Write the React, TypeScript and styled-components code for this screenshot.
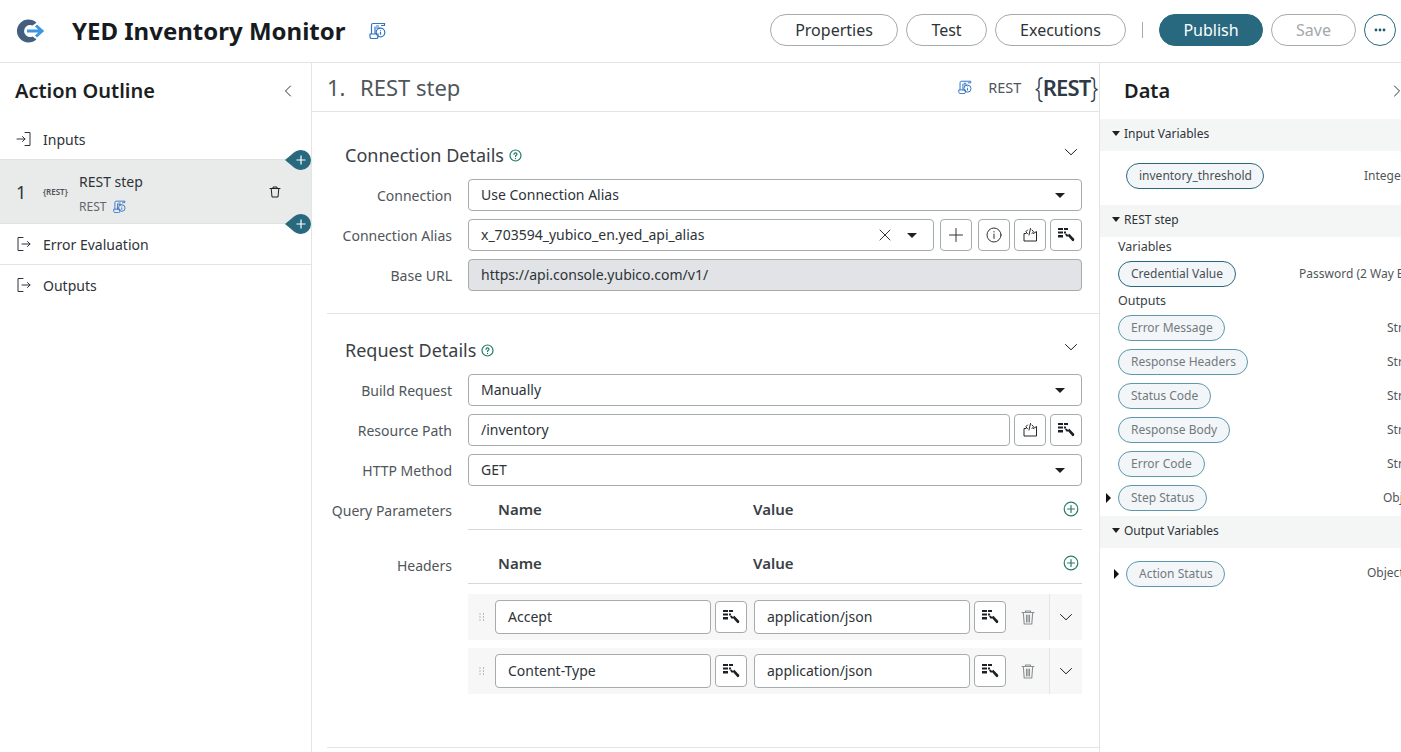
import styled, { createGlobalStyle } from "styled-components";
import { ReactNode } from "react";

const GlobalStyle = createGlobalStyle`
  html, body {
    margin: 0;
    padding: 0;
    height: 100%;
    background: #fff;
    font-family: "Noto Sans", "Open Sans", sans-serif;
    color: #2e3338;
  }
  * { box-sizing: border-box; }
`;

const Page = styled.div`
  width: 100vw;
  height: 100vh;
  overflow: hidden;
  display: flex;
  flex-direction: column;
`;

/* top bar */
const TopBar = styled.header`
  height: 63px;
  flex: none;
  display: flex;
  align-items: center;
  border-bottom: 1px solid #e3e5e5;
  padding: 0 5px 2px 16px;
`;

const Logo = styled.div`
  width: 30px;
  height: 24px;
  margin: 2px 26px 0 0;
  display: flex;
`;

const AppTitle = styled.h1`
  margin: 2px 24px 0 0;
  font-size: 24px;
  line-height: 32px;
  font-weight: 700;
  color: #171b1f;
`;

const TopActions = styled.div`
  margin-left: auto;
  display: flex;
  align-items: center;
  gap: 8px;
`;

const Pill = styled.button<{ $primary?: boolean; $disabled?: boolean; $w: number }>`
  width: ${(p) => p.$w}px;
  height: 32px;
  border-radius: 16px;
  font: 400 16px "Noto Sans", sans-serif;
  padding: 0;
  background: ${(p) => (p.$primary ? "#28697f" : "#fff")};
  color: ${(p) => (p.$primary ? "#fff" : p.$disabled ? "#a3a8ab" : "#2e3338")};
  border: 1px solid ${(p) => (p.$primary ? "#28697f" : "#a6abab")};
`;

const TopSep = styled.div`
  width: 1px;
  height: 16px;
  background: #a6abab;
  margin: 0 8px;
`;

const MoreButton = styled.button`
  width: 32px;
  height: 32px;
  border-radius: 50%;
  padding: 0;
  background: #fff;
  border: 1px solid #28697f;
  display: flex;
  align-items: center;
  justify-content: center;
`;

/* three columns */
const Columns = styled.div`
  flex: 1;
  min-height: 0;
  display: flex;
`;

const OutlinePanel = styled.aside`
  width: 312px;
  flex: none;
  border-right: 1px solid #e3e5e5;
`;

const OutlineHead = styled.div`
  height: 56px;
  padding: 0 19px 0 15px;
  display: flex;
  align-items: center;
  justify-content: space-between;
`;

const PanelTitle = styled.h2`
  margin: 0;
  font-size: 20px;
  line-height: 28px;
  font-weight: 600;
  color: #1b1f23;
`;

const OutlineRow = styled.div<{ $border?: boolean }>`
  height: ${(p) => (p.$border ? 41 : 40)}px;
  display: flex;
  align-items: center;
  gap: 11px;
  padding-left: 16px;
  font-size: 14px;
  color: #2e3338;
  border-bottom: ${(p) => (p.$border ? "1px solid #e3e5e5" : "none")};
`;

const StepRow = styled.div`
  position: relative;
  height: 65px;
  background: #e9ebeb;
  border-top: 1px solid #e0e2e2;
  border-bottom: 1px solid #e0e2e2;
  display: flex;
  align-items: center;
  padding-left: 16px;
`;

const StepNumber = styled.span`
  font-size: 18px;
  width: 27px;
`;

const StepGlyph = styled.span`
  font-size: 8px;
  font-weight: 600;
  width: 36px;
  color: #4d5257;
`;

const StepText = styled.div`
  flex: 1;
  display: flex;
  flex-direction: column;
  gap: 7px;
  padding-top: 3px;
`;

const StepName = styled.span`
  font-size: 14px;
  line-height: 20px;
`;

const StepKind = styled.span`
  font-size: 12px;
  line-height: 16px;
  color: #61676b;
  display: flex;
  align-items: center;
  gap: 7px;
`;

const TrashSlot = styled.span`
  width: 36px;
  margin-right: 18px;
  display: flex;
  justify-content: center;
`;

const AddMarker = styled.div<{ $place: "top" | "bottom" }>`
  position: absolute;
  right: 0;
  ${(p) => (p.$place === "top" ? "top: -10px;" : "bottom: -11px;")}
  width: 26px;
  height: 20px;
  display: flex;
`;

/* middle */
const EditorPanel = styled.main`
  width: 788px;
  flex: none;
  border-right: 1px solid #e3e5e5;
  padding-left: 15px;
`;

const EditorHead = styled.div`
  height: 49px;
  margin-left: -15px;
  padding: 0 2px 0 15px;
  border-bottom: 1px solid #e3e5e5;
  display: flex;
  align-items: center;
`;

const StepHeading = styled.div`
  font-size: 22px;
  color: #50565a;
  flex: 1;
  display: flex;
`;

const HeadingNumber = styled.span`
  width: 33px;
`;

const HeadKind = styled.span`
  font-size: 14.5px;
  color: #50565a;
  margin: 0 15px 0 16px;
`;

const RestMark = styled.span`
  display: flex;
  align-items: center;
  color: #2f3a48;
`;

const RestBrace = styled.span`
  font-size: 29px;
  line-height: 30px;
  font-weight: 300;
  display: inline-block;
  transform: scaleX(0.8);
  margin: 0 -2px;
`;

const RestWord = styled.span`
  font-size: 22px;
  line-height: 30px;
  font-weight: 600;
  letter-spacing: -0.8px;
`;

const Section = styled.section<{ $h: number; $pad: number }>`
  height: ${(p) => p.$h}px;
  border-bottom: 1px solid #e3e5e5;
  padding-top: ${(p) => p.$pad}px;
`;

const SectionHead = styled.div`
  height: 28px;
  margin: 0 22px 10px 18px;
  display: flex;
  align-items: center;
`;

const SectionTitle = styled.h3`
  margin: 0 5px 0 0;
  font-size: 18px;
  font-weight: 400;
  color: #3a4045;
`;

const Chevron = styled.span`
  margin: 0 0 6px auto;
  display: flex;
`;

const FormRow = styled.div`
  display: grid;
  grid-template-columns: 125px 1fr;
  column-gap: 16px;
  align-items: center;
  margin-bottom: 8px;
  width: 755px;
`;

const FieldLabel = styled.label`
  font-size: 14px;
  color: #50565a;
  text-align: right;
  white-space: nowrap;
`;

const FieldLine = styled.div`
  display: flex;
  gap: 4px;
`;

const Field = styled.div<{ $readOnly?: boolean }>`
  flex: 1;
  height: 32px;
  border: 1px solid #a6abab;
  border-radius: 4px;
  background: ${(p) => (p.$readOnly ? "#e1e3e6" : "#fff")};
  display: flex;
  align-items: center;
  padding: 0 16px 2px 12px;
  font-size: 14px;
  color: #2e3338;
`;

const FieldIcons = styled.span`
  margin: 2px 0 0 auto;
  display: flex;
  align-items: center;
  gap: 16px;
`;

const Caret = styled.span`
  width: 0;
  height: 0;
  border-left: 5px solid transparent;
  border-right: 5px solid transparent;
  border-top: 5px solid #1c2024;
`;

const IconButton = styled.button<{ $spaced?: boolean }>`
  width: 32px;
  height: 32px;
  flex: none;
  margin-left: ${(p) => (p.$spaced ? 2 : 0)}px;
  border: 1px solid #a6abab;
  border-radius: 4px;
  background: #fff;
  padding: 0;
  display: flex;
  align-items: center;
  justify-content: center;
`;

const ParamHead = styled.div<{ $top?: number }>`
  height: ${(p) => 36 + (p.$top ?? 0)}px;
  display: flex;
  align-items: center;
  border-bottom: 1px solid #d5d8d8;
  font-size: 15px;
  font-weight: 600;
  color: #3a4045;
  padding: ${(p) => p.$top ?? 0}px 3px 6px 30px;
`;

const ParamName = styled.span`
  width: 255px;
`;

const ParamAdd = styled.span`
  margin-left: auto;
  display: flex;
`;

const ParamBlock = styled.div`
  display: grid;
  grid-template-columns: 125px 614px;
  column-gap: 16px;
  width: 755px;
`;

const ParamLabel = styled(FieldLabel)<{ $top: number }>`
  padding-top: ${(p) => p.$top}px;
`;

const HeaderList = styled.div`
  display: flex;
  flex-direction: column;
  gap: 8px;
  padding-top: 10px;
`;

const HeaderRow = styled.div`
  height: 46px;
  background: #f7f7f7;
  display: flex;
  align-items: center;
`;

const DragDots = styled.span`
  width: 27px;
  display: flex;
  justify-content: center;
`;

const HeaderCell = styled.div`
  display: flex;
  gap: 4px;
  width: 252px;
  align-items: center;
  margin-right: 7px;
`;

const HeaderInput = styled(Field)`
  height: 34px;
`;

const HeaderTrash = styled.span`
  width: 36px;
  padding-right: 6px;
  display: flex;
  justify-content: center;
`;

const HeaderExpand = styled.span`
  height: 100%;
  flex: 1;
  border-left: 1px solid #e3e5e5;
  display: flex;
  align-items: center;
  justify-content: center;
`;

/* right */
const DataPanel = styled.aside`
  flex: 1;
  min-width: 0;
  overflow: hidden;
`;

const DataHead = styled.div`
  height: 56px;
  padding: 0 0 0 24px;
  display: flex;
  align-items: center;
  justify-content: space-between;
`;

const GroupBar = styled.div`
  height: 32px;
  background: #f4f6f6;
  display: flex;
  align-items: center;
  gap: 4px;
  padding: 0 0 3px 12px;
  font-size: 12px;
  color: #2e3338;
`;

const DownCaret = styled(Caret)`
  border-left-width: 4.5px;
  border-right-width: 4.5px;
`;

const SubLabel = styled.div`
  height: 20px;
  padding: 0 0 1px 18px;
  display: flex;
  align-items: center;
  font-size: 12.5px;
  color: #3a4045;
`;

const VarRow = styled.div<{ $pad: number; $h?: number; $after?: number }>`
  height: ${(p) => p.$h ?? 34}px;
  margin-bottom: ${(p) => p.$after ?? 0}px;
  display: flex;
  align-items: center;
  padding-left: ${(p) => p.$pad}px;
  white-space: nowrap;
`;

const VarSlot = styled.div<{ $w: number }>`
  width: ${(p) => p.$w}px;
  flex: none;
  display: flex;
  align-items: center;
`;

const VarPill = styled.span<{ $w: number; $muted?: boolean }>`
  width: ${(p) => p.$w}px;
  height: 26px;
  flex: none;
  border-radius: 13px;
  border: 1px solid ${(p) => (p.$muted ? "#5d98ad" : "#28697f")};
  background: #f2f6f8;
  display: flex;
  align-items: center;
  padding: 0 0 1px 12px;
  font-size: 12px;
  color: ${(p) => (p.$muted ? "#737a7e" : "#4a5055")};
`;

const VarType = styled.span`
  font-size: 12px;
  color: #50565a;
  padding-bottom: 2px;
`;

const SideCaret = styled.span`
  flex: none;
  width: 0;
  height: 0;
  margin-right: 7px;
  border-top: 5px solid transparent;
  border-bottom: 5px solid transparent;
  border-left: 5px solid #111;
`;

const Ic = ({ s = 16, w = s, sw = 1, c = "#2e3338", children }: { s?: number; w?: number; sw?: number; c?: string; children: ReactNode }) => (
  <svg width={w} height={s} viewBox={`0 0 ${w} ${s}`} fill="none" stroke={c} strokeWidth={sw} strokeLinecap="round" strokeLinejoin="round">
    {children}
  </svg>
);

const ScriptIcon = ({ s = 17, c = "#3374c4" }: { s?: number; c?: string }) => (
  <svg width={s} height={s} viewBox="0 0 17 17" fill="none" stroke={c} strokeWidth="1.2">
    <path d="M4 1.500h11.500v2H12M4 1.500c-1 0-1.500.8-1.500 1.800v8.500M6 4.500v8M1 12h8v2.800c0 1-.6 1.700-1.500 1.700H2.500C1.500 16.500 1 15.500 1 14.500V12z" />
    <circle cx="11.500" cy="10.500" r="4.300" />
    <path d="M11.500 9.800v3M11.500 8v.8M7 6h4M7 4h3" />
  </svg>
);

const PickerIcon = () => (
  <svg width="18" height="16" viewBox="0 0 18 16" fill="#1c2024">
    <rect x="1" y="1" width="5" height="2" />
    <rect x="7" y="1" width="4" height="2" />
    <rect x="1" y="4.500" width="5" height="2" />
    <rect x="7" y="4.500" width="2" height="2" />
    <rect x="1" y="8" width="5" height="2.500" />
    <path d="M8 7.500l1.500-1 2 2-1.500 1.500z" />
    <path d="M10.500 8.500l1.800-1.800 5 5.300-.3 1.800-1.500.4z" />
  </svg>
);

const CodeIcon = () => (
  <Ic s={16} sw={1} c="#22262a">
    <path d="M4 6.500H2v7.500h12.500V4.500L11.500 6.500" />
    <path d="M5.500 3L3.800 4.800 5.500 6.500M10 3l1.600 1.800L10 6.500M8.500 1.500L7 8" />
  </Ic>
);

const XIcon = () => (
  <Ic s={12} w={12} c="#2e3338">
    <path d="M1 1l10 10M11 1L1 11" />
  </Ic>
);

const ChevronDown = ({ w = 12 }: { w?: number }) => (
  <Ic s={8} w={w} c="#1c2024" sw={1}>
    <path d={`M.5 1.500L${w / 2} 6.800 ${w - 0.5} 1.500`} />
  </Ic>
);

const PlusCircle = () => (
  <Ic s={16} c="#2c7a6a" sw={1.2}>
    <circle cx="8" cy="8" r="6.800" />
    <path d="M8 4.500v7M4.500 8h7" />
  </Ic>
);

const HelpIcon = () => (
  <Ic s={13} w={13} c="#1f7a66" sw={1.2}>
    <circle cx="6.500" cy="6.500" r="5.500" />
    <path d="M5 5.300c0-2 3-2 3 0 0 1-1.500 1-1.500 2.200M6.500 9.300v.3" />
  </Ic>
);

const Trash = ({ c = "#8a8f91", s = 16 }: { c?: string; s?: number }) => (
  <Ic s={s} c={c} sw={1.1}>
    <path d="M2 3.500h12M5.500 3.500V2h5v1.500M3.300 3.500L4.200 15h7.600l.9-11.500M6.500 6v7M8 6v7M9.500 6v7" />
  </Ic>
);

const Drag = () => (
  <svg width="6" height="8" viewBox="0 0 6 8" fill="#7d8285">
    {[0.5, 3.5, 6.5].map((y) => (
      <g key={y}>
        <rect x="0.500" y={y} width="1" height="1" />
        <rect x="4" y={y} width="1" height="1" />
      </g>
    ))}
  </svg>
);

const Marker = ({ place }: { place: "top" | "bottom" }) => (
  <AddMarker $place={place}>
    <svg width="26" height="20" viewBox="0 0 26 20">
      <path d="M0 10 L9 2.500 C11 1 13 0 16 0 A10 10 0 0 1 16 20 C13 20 11 19 9 17.500 Z" fill="#28697f" />
      <path d="M16 5.500v9M11.500 10h9" stroke="#fff" strokeWidth="1.200" />
    </svg>
  </AddMarker>
);

const DataChevron = () => (
  <Ic s={12} w={8} c="#2e3338">
    <path d="M1.500 1l5 5-5 5" />
  </Ic>
);

const outputs: { name: string; w: number; type: string; typeX: number; caret?: boolean }[] = [
  { name: "Error Message", w: 107, type: "String", typeX: 287 },
  { name: "Response Headers", w: 130, type: "String", typeX: 287 },
  { name: "Status Code", w: 93, type: "String", typeX: 287 },
  { name: "Response Body", w: 112, type: "String", typeX: 287 },
  { name: "Error Code", w: 87, type: "String", typeX: 287 },
  { name: "Step Status", w: 89, type: "Object", typeX: 283, caret: true },
];

const HeaderEntry = ({ name, value }: { name: string; value: string }) => (
  <HeaderRow>
    <DragDots>
      <Drag />
    </DragDots>
    <HeaderCell>
      <HeaderInput>{name}</HeaderInput>
      <IconButton>
        <PickerIcon />
      </IconButton>
    </HeaderCell>
    <HeaderCell>
      <HeaderInput>{value}</HeaderInput>
      <IconButton>
        <PickerIcon />
      </IconButton>
    </HeaderCell>
    <HeaderTrash>
      <Trash />
    </HeaderTrash>
    <HeaderExpand>
      <ChevronDown />
    </HeaderExpand>
  </HeaderRow>
);

export default function App() {
  return (
    <Page>
      <GlobalStyle />
      <TopBar>
        <Logo>
          <svg width="30" height="24" viewBox="0 0 30 24">
            <path d="M20.500 3.800A11.500 11.500 0 1 0 20.500 20.200L16.500 17.500A6 6 0 1 1 16.500 6.500Z" fill="#42607d" />
            <path d="M11 12h15M20 6.500l6 5.500-6 5.500" fill="none" stroke="#3b97e3" strokeWidth="3" />
          </svg>
        </Logo>
        <AppTitle>YED Inventory Monitor</AppTitle>
        <ScriptIcon />
        <TopActions>
          <Pill $w={128}>Properties</Pill>
          <Pill $w={81}>Test</Pill>
          <Pill $w={131}>Executions</Pill>
          <TopSep />
          <Pill $w={104} $primary>Publish</Pill>
          <Pill $w={85} $disabled>Save</Pill>
          <MoreButton>
            <svg width="12" height="4" viewBox="0 0 12 4" fill="#1d5a70">
              <circle cx="2" cy="2" r="1.400" />
              <circle cx="6" cy="2" r="1.400" />
              <circle cx="10" cy="2" r="1.400" />
            </svg>
          </MoreButton>
        </TopActions>
      </TopBar>

      <Columns>
        <OutlinePanel>
          <OutlineHead>
            <PanelTitle>Action Outline</PanelTitle>
            <Ic s={12} w={8}>
              <path d="M6.500 1l-5 5 5 5" />
            </Ic>
          </OutlineHead>
          <OutlineRow>
            <Ic>
              <path d="M1 8h8M6.500 5.500L9 8l-2.500 2.500M9 1.500h5v13H9" />
            </Ic>
            Inputs
          </OutlineRow>
          <StepRow>
            <Marker place="top" />
            <StepNumber>1</StepNumber>
            <StepGlyph>{"{REST}"}</StepGlyph>
            <StepText>
              <StepName>REST step</StepName>
              <StepKind>
                REST
                <ScriptIcon s={13} />
              </StepKind>
            </StepText>
            <TrashSlot>
              <Ic s={12} w={12} c="#1c2024">
                <path d="M1 2.500h10M4 2.500V1h4v1.500M2.200 2.500L3 11h6l.8-8.500" />
              </Ic>
            </TrashSlot>
            <Marker place="bottom" />
          </StepRow>
          <OutlineRow $border>
            <Ic>
              <path d="M7 1.500H2v13h5M6 8h8M11.500 5.500L14 8l-2.500 2.500" />
            </Ic>
            Error Evaluation
          </OutlineRow>
          <OutlineRow>
            <Ic>
              <path d="M7 1.500H2v13h5M6 8h8M11.500 5.500L14 8l-2.500 2.500" />
            </Ic>
            Outputs
          </OutlineRow>
        </OutlinePanel>

        <EditorPanel>
          <EditorHead>
            <StepHeading>
              <HeadingNumber>1.</HeadingNumber>
              REST step
            </StepHeading>
            <ScriptIcon s={14} />
            <HeadKind>REST</HeadKind>
            <RestMark>
              <RestBrace>{"{"}</RestBrace>
              <RestWord>REST</RestWord>
              <RestBrace>{"}"}</RestBrace>
            </RestMark>
          </EditorHead>

          <Section $h={202} $pad={29}>
            <SectionHead>
              <SectionTitle>Connection Details</SectionTitle>
              <HelpIcon />
              <Chevron>
                <ChevronDown />
              </Chevron>
            </SectionHead>
            <FormRow>
              <FieldLabel>Connection</FieldLabel>
              <FieldLine>
                <Field>
                  Use Connection Alias
                  <FieldIcons>
                    <Caret />
                  </FieldIcons>
                </Field>
              </FieldLine>
            </FormRow>
            <FormRow>
              <FieldLabel>Connection Alias</FieldLabel>
              <FieldLine>
                <Field>
                  x_703594_yubico_en.yed_api_alias
                  <FieldIcons>
                    <XIcon />
                    <Caret />
                  </FieldIcons>
                </Field>
                <IconButton $spaced>
                  <Ic>
                    <path d="M8 1.500v13M1.500 8h13" />
                  </Ic>
                </IconButton>
                <IconButton $spaced>
                  <Ic>
                    <circle cx="8" cy="8" r="7" />
                    <path d="M8 7v4.500M8 4.500v.5" />
                  </Ic>
                </IconButton>
                <IconButton>
                  <CodeIcon />
                </IconButton>
                <IconButton>
                  <PickerIcon />
                </IconButton>
              </FieldLine>
            </FormRow>
            <FormRow>
              <FieldLabel>Base URL</FieldLabel>
              <FieldLine>
                <Field $readOnly>https://api.console.yubico.com/v1/</Field>
              </FieldLine>
            </FormRow>
          </Section>

          <Section $h={434} $pad={22}>
            <SectionHead>
              <SectionTitle>Request Details</SectionTitle>
              <HelpIcon />
              <Chevron>
                <ChevronDown />
              </Chevron>
            </SectionHead>
            <FormRow>
              <FieldLabel>Build Request</FieldLabel>
              <FieldLine>
                <Field>
                  Manually
                  <FieldIcons>
                    <Caret />
                  </FieldIcons>
                </Field>
              </FieldLine>
            </FormRow>
            <FormRow>
              <FieldLabel>Resource Path</FieldLabel>
              <FieldLine>
                <Field>/inventory</Field>
                <IconButton>
                  <CodeIcon />
                </IconButton>
                <IconButton>
                  <PickerIcon />
                </IconButton>
              </FieldLine>
            </FormRow>
            <FormRow>
              <FieldLabel>HTTP Method</FieldLabel>
              <FieldLine>
                <Field>
                  GET
                  <FieldIcons>
                    <Caret />
                  </FieldIcons>
                </Field>
              </FieldLine>
            </FormRow>
            <ParamBlock>
              <ParamLabel $top={7}>Query Parameters</ParamLabel>
              <ParamHead>
                <ParamName>Name</ParamName>
                Value
                <ParamAdd>
                  <PlusCircle />
                </ParamAdd>
              </ParamHead>
            </ParamBlock>
            <ParamBlock>
              <ParamLabel $top={26}>Headers</ParamLabel>
              <div>
                <ParamHead $top={18}>
                  <ParamName>Name</ParamName>
                  Value
                  <ParamAdd>
                    <PlusCircle />
                  </ParamAdd>
                </ParamHead>
                <HeaderList>
                  <HeaderEntry name="Accept" value="application/json" />
                  <HeaderEntry name="Content-Type" value="application/json" />
                </HeaderList>
              </div>
            </ParamBlock>
          </Section>
        </EditorPanel>

        <DataPanel>
          <DataHead>
            <PanelTitle>Data</PanelTitle>
            <DataChevron />
          </DataHead>
          <GroupBar>
            <DownCaret />
            Input Variables
          </GroupBar>
          <VarRow $pad={26} $h={50} $after={4}>
            <VarSlot $w={238}>
              <VarPill $w={138}>inventory_threshold</VarPill>
            </VarSlot>
            <VarType>Integer</VarType>
          </VarRow>
          <GroupBar>
            <DownCaret />
            REST step
          </GroupBar>
          <SubLabel>Variables</SubLabel>
          <VarRow $pad={18}>
            <VarSlot $w={181}>
              <VarPill $w={118}>Credential Value</VarPill>
            </VarSlot>
            <VarType>Password (2 Way Encrypted)</VarType>
          </VarRow>
          <SubLabel>Outputs</SubLabel>
          {outputs.map((o) => (
            <VarRow key={o.name} $pad={o.caret ? 6 : 18} $after={o.caret ? 1 : 0}>
              <VarSlot $w={o.typeX - (o.caret ? 6 : 18)}>
                {o.caret && <SideCaret />}
                <VarPill $w={o.w} $muted>
                  {o.name}
                </VarPill>
              </VarSlot>
              <VarType>{o.type}</VarType>
            </VarRow>
          ))}
          <GroupBar>
            <DownCaret />
            Output Variables
          </GroupBar>
          <VarRow $pad={14} $h={51}>
            <VarSlot $w={253}>
              <SideCaret />
              <VarPill $w={99} $muted>
                Action Status
              </VarPill>
            </VarSlot>
            <VarType>Object</VarType>
          </VarRow>
        </DataPanel>
      </Columns>
    </Page>
  );
}
